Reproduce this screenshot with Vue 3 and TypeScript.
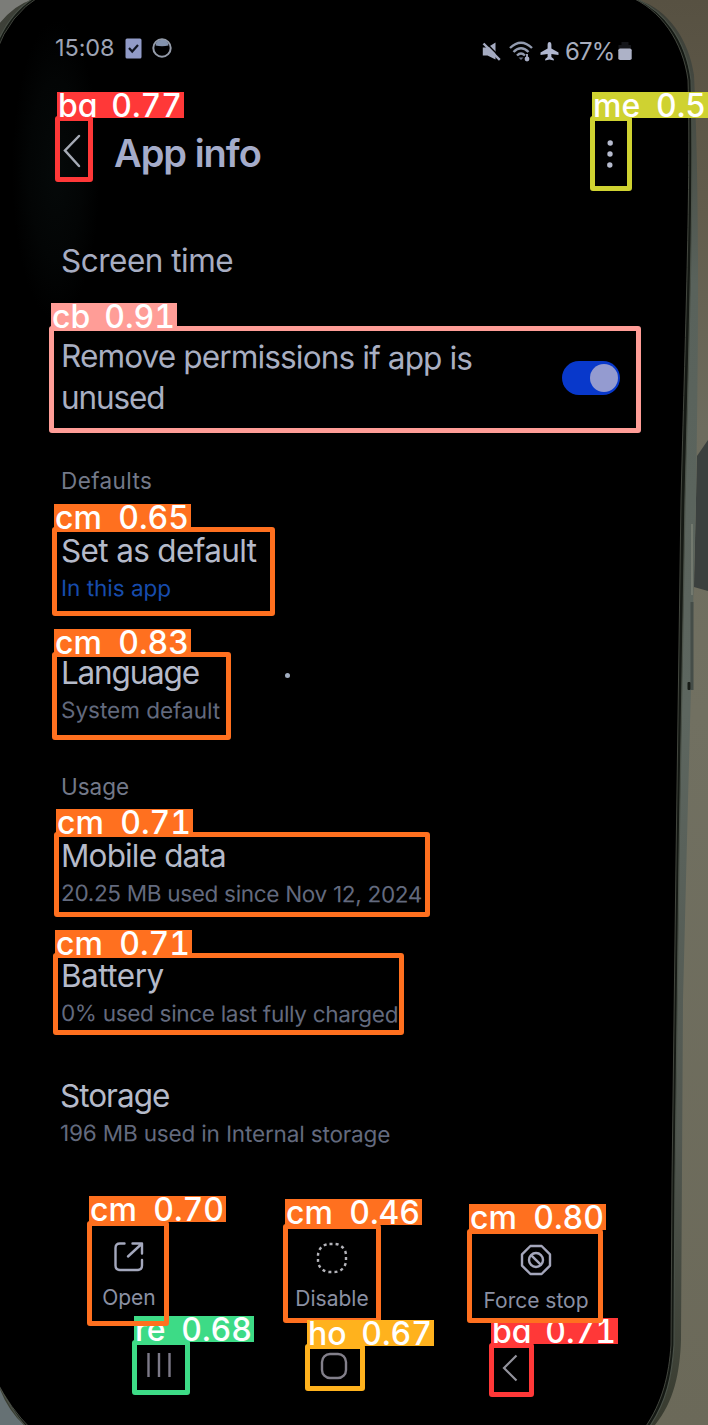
<script setup lang="ts">
interface Detection {
  code: string
  score: string
  color: string
  label: [number, number, number]
  box: [number, number, number, number]
}

interface Entry {
  title: string
  sub: string
  key: string
  accent?: boolean
}

const defaults: Entry[] = [
  { key: 'set', title: 'Set as default', sub: 'In this app', accent: true },
  { key: 'lang', title: 'Language', sub: 'System default' },
]

const usage: Entry[] = [
  { key: 'mobile', title: 'Mobile data', sub: '20.25 MB used since Nov 12, 2024' },
  { key: 'battery', title: 'Battery', sub: '0% used since last fully charged' },
  { key: 'storage', title: 'Storage', sub: '196 MB used in Internal storage' },
]

const orange = '#ff701f'
const red = '#ff3838'

// label: left, top, width; box: left, top, right, bottom (outer edges)
const detections: Detection[] = [
  { code: 're', score: '0.68', color: '#3ddb86', label: [134, 1316, 120], box: [132, 1340, 190, 1395] },
  { code: 'ba', score: '0.71', color: red, label: [491, 1318, 127], box: [489, 1343, 534, 1397] },
  { code: 'cm', score: '0.46', color: orange, label: [285, 1199, 137], box: [283, 1224, 381, 1323] },
  { code: 'ho', score: '0.67', color: '#ffb21d', label: [307, 1320, 127], box: [305, 1344, 365, 1391] },
  { code: 'me', score: '0.5', color: '#cfd231', label: [592, 92, 116], box: [590, 116, 632, 191] },
  { code: 'cm', score: '0.65', color: orange, label: [54, 504, 137], box: [52, 527, 275, 616] },
  { code: 'cm', score: '0.70', color: orange, label: [89, 1196, 137], box: [87, 1221, 169, 1326] },
  { code: 'cm', score: '0.71', color: orange, label: [56, 809, 137], box: [54, 832, 430, 917] },
  { code: 'cm', score: '0.71', color: orange, label: [55, 930, 137], box: [53, 953, 404, 1035] },
  { code: 'ba', score: '0.77', color: red, label: [57, 92, 127], box: [55, 116, 93, 182] },
  { code: 'cm', score: '0.80', color: orange, label: [469, 1204, 137], box: [467, 1229, 603, 1323] },
  { code: 'cm', score: '0.83', color: orange, label: [54, 629, 137], box: [52, 652, 231, 740] },
  { code: 'cb', score: '0.91', color: '#ff9d97', label: [51, 303, 126], box: [49, 326, 641, 433] },
]

const boxStyle = (d: Detection) => ({
  left: `${d.box[0]}px`,
  top: `${d.box[1]}px`,
  width: `${d.box[2] - d.box[0]}px`,
  height: `${d.box[3] - d.box[1]}px`,
  borderColor: d.color,
})

const labelStyle = (d: Detection) => ({
  left: `${d.label[0]}px`,
  top: `${d.label[1]}px`,
  width: `${d.label[2]}px`,
  backgroundColor: d.color,
})
</script>

<template>
  <div class="stage">
    <svg class="backdrop" viewBox="0 0 708 1425" aria-hidden="true">
      <defs>
        <linearGradient id="wall" x1="0" y1="0" x2="0" y2="1">
          <stop offset="0" stop-color="#575142" />
          <stop offset="0.15" stop-color="#625c4c" />
          <stop offset="0.3" stop-color="#6d6c5e" />
          <stop offset="0.5" stop-color="#717061" />
          <stop offset="1" stop-color="#6b6959" />
        </linearGradient>
        <linearGradient id="rail" x1="0" y1="0" x2="0" y2="1">
          <stop offset="0" stop-color="#3b3d35" />
          <stop offset="0.2" stop-color="#59625b" />
          <stop offset="0.5" stop-color="#5d665f" />
          <stop offset="0.8" stop-color="#515750" />
          <stop offset="1" stop-color="#383b2f" />
        </linearGradient>
        <radialGradient id="glare">
          <stop offset="0" stop-color="#050909" />
          <stop offset="0.6" stop-color="#030505" />
          <stop offset="1" stop-color="#000" />
        </radialGradient>
      </defs>
      <rect width="708" height="1425" fill="url(#wall)" />
      <rect width="60" height="60" fill="#7b7c78" />
      <path d="M0 1340H60V1425H0Z" fill="#667174" />
      <path d="M708 440 L697 456 L694 587 L708 591Z" fill="#3b403e" />
      <path d="M-4 28 Q12 6 31 0 H638 C668 9 689 40 694 75 C699 180 699 300 696 500 L688 800 L683 1000 L681 1340 C680 1372 674 1402 655 1425 H24 Q5 1408 -4 1378Z" fill="url(#rail)" />
      <path d="M-4 46 Q10 11 37 -4 H630 C664 9 686 40 691 80 C694 180 689 340 685 500 L679 860 L675 1180 L674 1345 C672 1375 667 1402 648 1429 H28 Q8 1408 -4 1376Z" fill="#151914" stroke="#4a5148" stroke-width="1.2" />
      <path d="M-4 52 Q10 14 40 -4 H628 C661 9 683 42 688 80 C691 180 685 340 681 500 L676 860 L672 1180 L671 1345 C669 1374 663 1402 644 1429 H31 Q10 1408 -4 1380Z" fill="#000" stroke="#5b6056" stroke-width=".7" />
      <ellipse cx="56" cy="170" rx="44" ry="150" fill="url(#glare)" />
      <path d="M692 602V690" stroke="#454d48" stroke-width="3" />
      <rect x="687.500" y="682" width="3" height="8" rx="1" fill="#171b16" />
      <path d="M692 524V595" stroke="#8a8e80" stroke-width="1" />
    </svg>

    <main class="screen">
      <header class="status">
        <div class="status-left">
          <span class="clock">15:08</span>
          <svg class="i-task" viewBox="0 0 17 21">
            <rect x=".5" y=".5" width="16" height="20" rx="1.500" fill="#919bc8" />
            <path d="M4 10l3.200 3.500L13 7" fill="none" stroke="#101522" stroke-width="2.200" />
          </svg>
          <svg class="i-ring" viewBox="0 0 20 20">
            <circle cx="10" cy="10" r="8.700" fill="none" stroke="#949ba9" stroke-width="2" />
            <path d="M3.500 7.500Q4 2 10 1.800T16.500 7.500Q10 9 3.500 7.500Z" fill="#8392ad" />
          </svg>
        </div>
        <div class="status-right">
          <svg class="i-mute" viewBox="0 0 19 19">
            <path d="M.8 5.500H5.500L13.500 .5V17.500L5.500 13.500H.8Z" fill="#a5abc1" />
            <path d="M3.600 .5L19 16" stroke="#000" stroke-width="1.500" />
            <path d="M1.500 1.500L17.800 17.800" stroke="#a5abc1" stroke-width="2.400" />
          </svg>
          <svg class="i-wifi" viewBox="0 0 24 21">
            <g fill="none" stroke="#929baf" stroke-width="2.400">
              <path d="M1 7Q12-3.500 23 7" />
              <path d="M4.500 11Q12 3.500 19.500 11" />
              <path d="M8 14.500Q12 10.500 16 14.500" />
            </g>
            <path d="M9.500 16.500h5L12 19Z" fill="#687084" />
            <path d="M18 13v5" fill="none" stroke="#a5abc1" stroke-width="1.800" />
            <circle cx="18" cy="18" r="2.400" fill="#a5abc1" />
          </svg>
          <svg class="i-plane" viewBox="0 0 19 19">
            <path d="M9.500 0Q11.400 0 11.400 3V6.500L18.500 10.500V13L11.400 12V15L13.800 17V18.500L9.500 17.500L5.200 18.500V17L7.600 15V12L.5 13V10.500L7.600 6.500V3Q7.600 0 9.500 0Z" fill="#b0b7d0" />
          </svg>
          <span class="percent">67%</span>
          <svg class="i-batt" viewBox="0 0 14 18">
            <path d="M3.500 0H10.500V3H13V7H.5V3H3.500Z" fill="#141519" />
            <rect x=".3" y="6.500" width="13.400" height="11.500" rx="1.800" fill="#adb2c7" />
          </svg>
        </div>
      </header>

      <div class="appbar">
        <svg class="i-back" viewBox="0 0 18 34">
          <path d="M16 2L2 16.500L16 32" fill="none" stroke="#a6abb6" stroke-width="2.500" stroke-linecap="round" />
        </svg>
        <h1>App info</h1>
        <svg class="i-more" viewBox="0 0 8 30">
          <circle cx="4.200" cy="4" r="2.700" />
          <circle cx="4" cy="15" r="2.700" />
          <circle cx="3.800" cy="26" r="2.700" />
        </svg>
      </div>

      <p class="title screen-time">Screen time</p>

      <div class="permission">
        <p class="title two-line"><span class="tilt">Remove permissions if app is</span><br /><span class="unused">unused</span></p>
        <span class="toggle"><i></i></span>
      </div>

      <h2 class="h-defaults">Defaults</h2>
      <div v-for="e in defaults" :key="e.key" class="entry" :class="e.key">
        <p class="title">{{ e.title }}</p>
        <p class="sub" :class="{ accent: e.accent }">{{ e.sub }}</p>
      </div>

      <h2 class="h-usage">Usage</h2>
      <div v-for="e in usage" :key="e.key" class="entry" :class="e.key">
        <p class="title">{{ e.title }}</p>
        <p class="sub">{{ e.sub }}</p>
      </div>

      <div class="actions">
        <div class="action open">
          <svg viewBox="0 0 32 32">
            <g fill="none" stroke="#a4a8bd" stroke-width="2.400" stroke-linecap="round" stroke-linejoin="round">
              <path d="M11.500 2.500H7Q2.500 2.500 2.500 7V24.500Q2.500 29 7 29H24.500Q29 29 29 24.500V19" />
              <path d="M15 15.500L28.500 3M19.500 2.500H29V12.500" />
            </g>
          </svg>
          <span>Open</span>
        </div>
        <div class="action disable">
          <svg viewBox="0 0 32 32">
            <rect x="2" y="2" width="28" height="28" rx="11.500" fill="none" stroke="#b3b3b9" stroke-width="2.400" stroke-dasharray="3 3.130" />
          </svg>
          <span>Disable</span>
        </div>
        <div class="action stop">
          <svg viewBox="0 0 32 32">
            <g fill="none" stroke="#a4a6bb" stroke-width="2.400" stroke-linejoin="round">
              <path d="M10.400 2H21.600L30 10.400V21.600L21.600 30H10.400L2 21.600V10.400Z" />
              <circle cx="16" cy="16" r="7" />
              <path d="M11.300 11.300L20.700 20.700" />
            </g>
          </svg>
          <span>Force stop</span>
        </div>
      </div>

      <nav class="navbar">
        <svg class="n-recents" viewBox="0 0 28 28">
          <path d="M2.500 2V26M13 2V26M23.500 2V26" stroke="#7d7a88" stroke-width="2.400" />
        </svg>
        <svg class="n-home" viewBox="0 0 28 28">
          <rect x="2" y="2" width="24" height="24" rx="8" fill="none" stroke="#827f8a" stroke-width="2.400" />
        </svg>
        <svg class="n-back" viewBox="0 0 16 28">
          <path d="M14.500 1.500L2 14L14.500 26.500" fill="none" stroke="#92929c" stroke-width="2.200" />
        </svg>
      </nav>
    </main>

    <i class="speck"></i>

    <template v-for="(d, i) in detections" :key="i">
      <div class="box" :style="boxStyle(d)"></div>
      <div class="label" :style="labelStyle(d)">
        <span>{{ d.code }}</span><span>{{ d.score }}</span>
      </div>
    </template>
  </div>
</template>

<style>
body {
  margin: 0;
  background: #000;
}
</style>

<style scoped>
.stage {
  position: relative;
  width: 708px;
  height: 1425px;
  overflow: hidden;
  background: #000;
  font-family: Inter, Roboto, sans-serif;
}
.backdrop {
  position: absolute;
  inset: 0;
  width: 708px;
  height: 1425px;
}
.screen {
  position: relative;
  display: flex;
  flex-direction: column;
  box-sizing: border-box;
  width: 640px;
  height: 1425px;
  padding-left: 61px;
  color: #a9afc5;
}
svg {
  display: block;
  flex: none;
}
p,
h1,
h2 {
  margin: 0;
  white-space: nowrap;
}
.status {
  display: flex;
  justify-content: space-between;
  height: 30px;
  margin: 33px 8px 0 -6px;
}
.status-left,
.status-right {
  display: flex;
  align-items: center;
}
.status-right {
  padding-top: 6px;
}
.clock {
  width: 59px;
  margin-top: -2px;
  font-size: 23.5px;
  color: #9ea4b5;
  letter-spacing: -0.1px;
}
.i-task {
  width: 17px;
  height: 21px;
  margin-left: 11px;
}
.i-ring {
  width: 20px;
  height: 20px;
  margin-left: 10px;
}
.i-mute {
  width: 19px;
  height: 19px;
}
.i-wifi {
  width: 24px;
  height: 21px;
  margin-left: 8px;
}
.i-plane {
  width: 19px;
  height: 19px;
  margin-left: 7px;
}
.percent {
  width: 49px;
  margin-left: 6px;
  font-size: 24px;
  color: #a7adbd;
  letter-spacing: -0.8px;
}
.i-batt {
  width: 14px;
  height: 18px;
  margin-left: 4px;
}
.appbar {
  display: flex;
  align-items: center;
  height: 50px;
  margin-top: 65px;
}
.i-back {
  width: 18px;
  height: 34px;
  margin: 0 0 4px 2px;
}
h1 {
  margin-left: 33px;
  font-size: 38px;
  line-height: 50px;
  font-weight: 600;
  letter-spacing: -1px;
  color: #a5acca;
}
.i-more {
  width: 8px;
  height: 30px;
  margin: 2px 26px 0 auto;
  fill: #b6bbce;
}
.title {
  font-size: 31.5px;
  line-height: 40px;
  letter-spacing: -0.85px;
  color: #b5bac9;
}
.screen-time {
  margin-top: 63px;
  color: #a7adc2;
  letter-spacing: -0.5px;
}
.permission {
  display: flex;
  justify-content: space-between;
  align-items: center;
  height: 84px;
  margin: 54px 20px 0 0;
}
.two-line {
  line-height: 42px;
  color: #a9afc2;
}
.tilt {
  display: inline-block;
  transform: rotate(0.35deg);
  transform-origin: 0 50%;
}
.unused {
  letter-spacing: -1.1px;
}
.toggle {
  display: flex;
  justify-content: flex-end;
  box-sizing: border-box;
  width: 58px;
  height: 34px;
  margin-top: 1px;
  padding: 3px 2px;
  border-radius: 17px;
  background: #0838cb;
}
.toggle i {
  width: 28px;
  height: 28px;
  border-radius: 50%;
  background: #949bd0;
}
h2 {
  font-size: 22.5px;
  line-height: 30px;
  font-weight: 400;
  color: #737989;
}
.h-defaults {
  margin-top: 47px;
  letter-spacing: 0.4px;
}
.sub {
  margin-top: -1px;
  font-size: 22.5px;
  line-height: 35px;
  color: #636a7e;
  transform: rotate(0.25deg);
  transform-origin: 0 50%;
}
.accent {
  color: #174cad;
}
.set {
  margin-top: 35px;
}
.set .title {
  letter-spacing: -0.65px;
}
.lang {
  margin-top: 48px;
}
.lang .title {
  letter-spacing: -1.2px;
}
.h-usage {
  margin-top: 45px;
}
.mobile {
  margin-top: 34px;
}
.mobile .sub,
.battery .sub {
  letter-spacing: -0.3px;
}
.battery,
.storage {
  margin-top: 46px;
}
.battery .title {
  letter-spacing: -0.5px;
}
.storage {
  margin-left: -1px;
}
.storage .title {
  letter-spacing: -1px;
}
.storage .sub {
  letter-spacing: -0.15px;
}
.actions {
  display: flex;
  height: 78px;
  margin-top: 89px;
}
.action {
  display: flex;
  flex-direction: column;
  align-items: center;
  width: 120px;
  font-size: 21px;
  line-height: 30px;
  color: #8b90a3;
  white-space: nowrap;
}
.action svg {
  width: 32px;
  height: 32px;
}
.action span {
  margin-top: 10px;
}
.open {
  margin-left: 8px;
}
.open svg {
  margin-top: 2px;
}
.disable {
  margin-left: 83px;
}
.disable svg {
  margin-top: 3px;
}
.stop {
  margin-left: 84px;
}
.stop svg {
  margin-top: 5px;
}
.navbar {
  display: flex;
  margin-top: 34px;
}
.n-recents {
  width: 28px;
  height: 28px;
  margin: 0 0 0 85px;
}
.n-home {
  width: 28px;
  height: 28px;
  margin: 1px 0 0 146px;
}
.n-back {
  width: 16px;
  height: 28px;
  margin: 3px 0 0 154px;
}
.speck {
  position: absolute;
  left: 285px;
  top: 673px;
  width: 5px;
  height: 5px;
  border-radius: 50%;
  background: #a2adc0;
}
.box {
  position: absolute;
  box-sizing: border-box;
  border: 5px solid;
  border-radius: 3px;
}
.label {
  position: absolute;
  display: flex;
  justify-content: space-between;
  box-sizing: border-box;
  height: 26px;
  padding: 0 2px 0 1px;
  font-size: 32px;
  line-height: 27px;
  font-weight: 500;
  color: #fff;
  white-space: nowrap;
  font-feature-settings: 'cv11', 'tnum';
}
</style>
